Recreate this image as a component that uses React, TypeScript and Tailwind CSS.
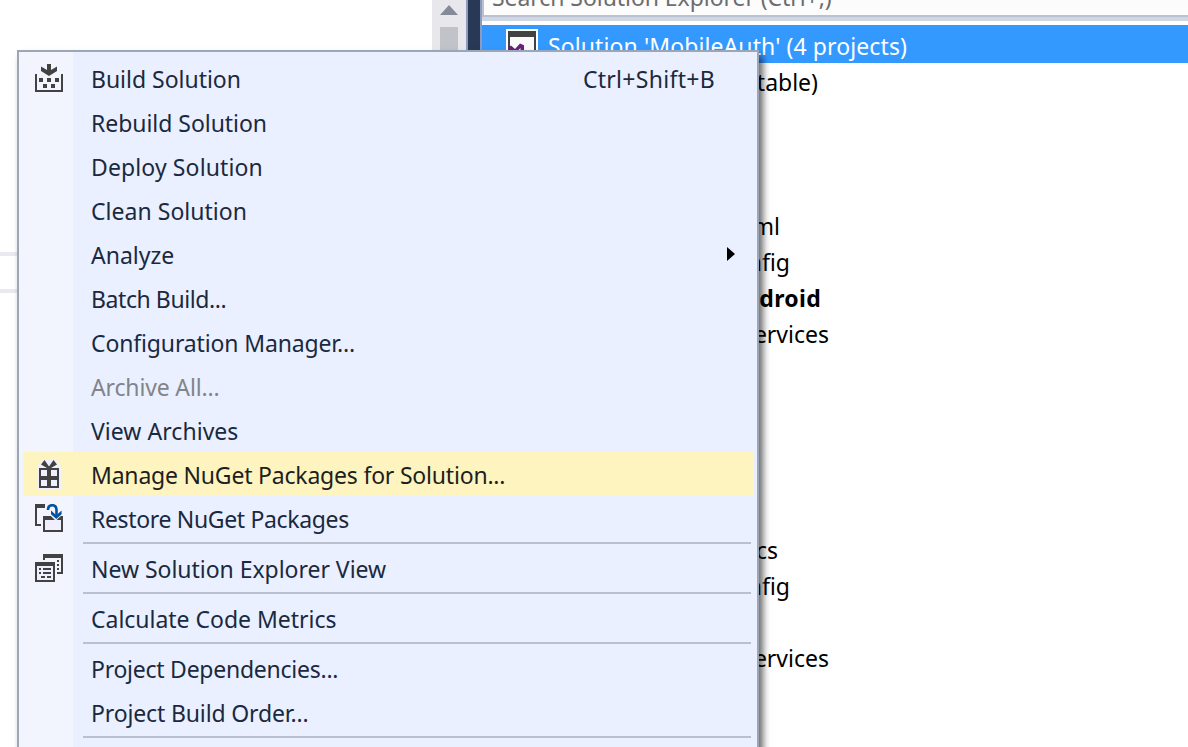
import type { ReactNode } from 'react';

type Entry = {
  label: string;
  tracking: string;
  icon?: ReactNode;
  shortcut?: string;
  submenu?: boolean;
  disabled?: boolean;
  active?: boolean;
};

function BuildIcon() {
  return (
    <svg width="28" height="28" viewBox="0 0 28 28" fill="#424242" shapeRendering="crispEdges">
      <path d="M0 10h2v16h24V10h2v18H0z" />
      <path d="M4 14h4v4H4zM12 14h4v4h-4zM20 14h4v4h-4zM8 20h4v4H8zM16 20h4v4h-4z" />
      <path shapeRendering="auto" d="M12 0h4v6l6-3.600v4.600L14 12 6 7V2.400L12 6z" />
    </svg>
  );
}

function GiftIcon() {
  return (
    <svg width="28" height="32" viewBox="0 0 28 32">
      <path d="M2 9 6 5V1h16v4l4 4v22H2z" fill="#f0effd" />
      <path d="M4 10h20v20H4z" fill="#424242" />
      <path d="M6 12h6v6H6zM16 12h6v6h-6zM6 22h6v6H6zM16 22h6v6h-6z" fill="#f0effd" />
      <path d="M6 6.500 9.500 2 14 8.500 18.500 2 22 6.500 16 10h-4z" fill="#424242" />
    </svg>
  );
}

function RestoreIcon() {
  return (
    <svg width="28" height="28" viewBox="0 0 28 28">
      <path d="M0 0h10v4H2v16h4v2H0z" fill="#424242" />
      <path d="M8 12h8l4 4 4-4h4v16H8z" fill="#424242" />
      <path d="M10 16h16v10H10z" fill="#f0effd" />
      <path d="m12 8 9 8.500L28 10V5H13z" fill="#f2f4fe" />
      <path d="M8 12h6v4H8z" fill="#424242" />
      <path d="M26 12h2v5h-2z" fill="#424242" />
      <path d="M13 6C13 2.500 15 1.200 17.200 1.200c3.200 0 4.300 2.200 4.300 5v6" fill="none" stroke="#00539c" strokeWidth="2.600" />
      <path d="M16 6.500v3.800l5.300 4.700L26.600 10.300V6.500l-5.300 4.700z" fill="#00539c" />
    </svg>
  );
}

function WindowsIcon() {
  return (
    <svg width="28" height="28" viewBox="0 0 28 28" shapeRendering="crispEdges">
      <path d="M8 0h20v20h-6v-2h4V4H10v2H8z" fill="#424242" />
      <path d="M22 6h2v2h-2zM22 10h2v2h-2zM22 14h2v2h-2z" fill="#424242" />
      <path d="M0 8h20v20H0z" fill="#424242" />
      <path d="M2 12h16v14H2z" fill="#f0effd" />
      <path d="M4 14h2v2H4zM8 14h8v2H8zM4 18h2v2H4zM8 18h8v2H8zM6 22h4v2H6zM12 22h4v2h-4z" fill="#424242" />
    </svg>
  );
}

function SolutionIcon() {
  return (
    <svg width="32" height="32" viewBox="0 0 32 32" className="shrink-0">
      <path d="M0 0h32v32H0z" fill="#fff" />
      <path d="M2 2h28v28H2z" fill="#424242" />
      <path d="M4 8h24v20H4z" fill="#fafafa" />
      <path d="M2 18.500 5 16.500l4 3.500 5-5.500 4 1.800V30H2z" fill="#68217a" />
      <path d="m5 22 2.500-1 2.500 2.500L14.500 19v8z" fill="#fafafa" />
    </svg>
  );
}

const groups: Entry[][] = [
  [
    { label: 'Build Solution', tracking: 'tracking-[-0.02px]', shortcut: 'Ctrl+Shift+B', icon: <BuildIcon /> },
    { label: 'Rebuild Solution', tracking: 'tracking-[-0.04px]' },
    { label: 'Deploy Solution', tracking: 'tracking-[0.12px]' },
    { label: 'Clean Solution', tracking: 'tracking-[0.03px]' },
    { label: 'Analyze', tracking: 'tracking-[0px]', submenu: true },
    { label: 'Batch Build...', tracking: 'tracking-[-0.42px]' },
    { label: 'Configuration Manager...', tracking: 'tracking-[-0.14px]' },
    { label: 'Archive All...', tracking: 'tracking-[-0.15px]', disabled: true },
    { label: 'View Archives', tracking: 'tracking-[0.04px]' },
    { label: 'Manage NuGet Packages for Solution...', tracking: 'tracking-[-0.2px]', active: true, icon: <GiftIcon /> },
    { label: 'Restore NuGet Packages', tracking: 'tracking-[-0.34px]', icon: <RestoreIcon /> },
  ],
  [{ label: 'New Solution Explorer View', tracking: 'tracking-[-0.03px]', icon: <WindowsIcon /> }],
  [{ label: 'Calculate Code Metrics', tracking: 'tracking-[-0.02px]' }],
  [
    { label: 'Project Dependencies...', tracking: 'tracking-[-0.25px]' },
    { label: 'Project Build Order...', tracking: 'tracking-[-0.14px]' },
  ],
  [],
];

function MenuRow({ entry }: { entry: Entry }) {
  const color = entry.disabled ? 'text-[#838488]' : entry.active ? 'text-[#1e1e1e]' : 'text-[#1b293e]';
  return (
    <div className={`mx-1 flex h-11 items-center ${color} ${entry.active ? 'bg-[#fdf4bf]' : ''}`}>
      <div className="flex w-[52px] shrink-0 justify-center">{entry.icon}</div>
      <span className={`ml-4 flex-1 pt-[2px] whitespace-nowrap ${entry.tracking}`}>{entry.label}</span>
      {entry.shortcut && <span className="mr-[38px] pt-[2px] tracking-[0.3px]">{entry.shortcut}</span>}
      {entry.submenu && (
        <svg width="8" height="14" viewBox="0 0 8 14" className="mr-[18px]">
          <path d="M0 0v14l8-7z" fill="#000" />
        </svg>
      )}
    </div>
  );
}

function ContextMenu() {
  return (
    <div className="absolute top-[50px] left-[17px] h-[720px] w-[742px] border-2 border-[#9ba7b7] bg-linear-to-r from-[#f2f4fe] from-[54px] to-[#eaf0ff] to-[54px] pt-1 shadow-[4px_6px_7px_0px_rgba(0,0,0,0.6)]">
      {groups.map((group, i) => (
        <div key={i}>
          {i > 0 && <div className="mt-[2px] mr-[6px] mb-[2px] ml-[64px] h-[2px] bg-[#bcc0cd]" />}
          {group.map((entry) => (
            <MenuRow key={entry.label} entry={entry} />
          ))}
        </div>
      ))}
    </div>
  );
}

const tree: { text: string; width: string; bold?: boolean }[] = [
  { text: 'table)', width: 'w-[336px]' },
  { text: '', width: '' },
  { text: '', width: '' },
  { text: '', width: '' },
  { text: 'ml', width: 'w-[298px]' },
  { text: 'nfig', width: 'w-[308px]' },
  { text: 'droid', width: 'w-[339px]', bold: true },
  { text: 'ervices', width: 'w-[347px]' },
  { text: '', width: '' },
  { text: '', width: '' },
  { text: '', width: '' },
  { text: '', width: '' },
  { text: '', width: '' },
  { text: 'cs', width: 'w-[296px]' },
  { text: 'nfig', width: 'w-[308px]' },
  { text: '', width: '' },
  { text: 'ervices', width: 'w-[347px]' },
];

export default function App() {
  return (
    <div className="relative flex h-[747px] w-[1188px] overflow-hidden bg-white font-['Noto_Sans',sans-serif] text-[23px] leading-[36px]">
      <div className="flex w-[432px] flex-col pt-[252px]">
        <div className="h-[41px] border-y-4 border-[#e9e9f1]" />
      </div>
      <div className="flex w-[34px] flex-col items-center bg-[#e8e8ec] pt-[5px]">
        <svg width="18" height="10" viewBox="0 0 18 10">
          <path d="M9 0 18 10H0z" fill="#868999" />
        </svg>
        <div className="mt-3 w-[18px] flex-1 bg-[#c2c3c9]" />
      </div>
      <div className="w-4 border-x-2 border-[#8e9bbc] bg-[#293955]" />
      <div className="flex-1">
        <div className="flex h-[17px] items-end overflow-hidden border-b-2 border-l-2 border-[#bac2cf] bg-[#fcfcfc] pl-2 text-[#6d6d6d]">
          <span className="whitespace-nowrap tracking-[-0.06px]">Search Solution Explorer (Ctrl+,)</span>
        </div>
        <div className="h-1 bg-[#cfd6e5]" />
        <div className="mt-1 flex h-[38px] items-start bg-[#3399ff] pt-1 pl-6 text-white">
          <SolutionIcon />
          <span className="-mt-[1px] ml-[10px] whitespace-nowrap tracking-[0.1px]">Solution 'MobileAuth' (4 projects)</span>
        </div>
        <div className="pt-[1px] text-black">
          {tree.map((row, i) => (
            <div key={i} className={`flex h-9 justify-end ${row.width} ${row.bold ? 'font-bold tracking-[0.3px]' : ''}`}>
              {row.text}
            </div>
          ))}
        </div>
      </div>
      <ContextMenu />
    </div>
  );
}
